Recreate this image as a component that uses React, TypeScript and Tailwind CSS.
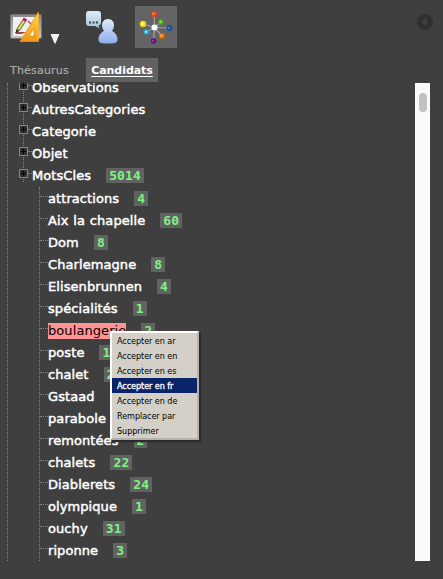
import React from "react";

const categories: { name: string; count?: number }[] = [
  { name: "Observations" },
  { name: "AutresCategories" },
  { name: "Categorie" },
  { name: "Objet" },
  { name: "MotsCles", count: 5014 },
];

const keywords = [
  { name: "attractions", count: 4 },
  { name: "Aix la chapelle", count: 60 },
  { name: "Dom", count: 8 },
  { name: "Charlemagne", count: 8 },
  { name: "Elisenbrunnen", count: 4 },
  { name: "spécialités", count: 1 },
  { name: "boulangerie", count: 2, selected: true },
  { name: "poste", count: 1 },
  { name: "chalet", count: 2 },
  { name: "Gstaad", count: 1 },
  { name: "parabole", count: 1 },
  { name: "remontées", count: 2 },
  { name: "chalets", count: 22 },
  { name: "Diablerets", count: 24 },
  { name: "olympique", count: 1 },
  { name: "ouchy", count: 31 },
  { name: "riponne", count: 3 },
];

const actions = [
  "Accepter en ar",
  "Accepter en en",
  "Accepter en es",
  "Accepter en fr",
  "Accepter en de",
  "Remplacer par",
  "Supprimer",
];

function Count({ value }: { value: number }) {
  return (
    <span className="ml-[15px] h-[15px] bg-[#626262] px-[3px] font-['DejaVu_Sans_Mono',monospace] text-[13px] leading-[15px] font-bold tracking-[0.15px] text-[#7df383] [-webkit-text-stroke:0px]">
      {value}
    </span>
  );
}

function BasketIcon() {
  return (
    <svg width="34" height="34" viewBox="0 0 34 34">
      <defs>
        <linearGradient id="square" x1="0" y1="0" x2="0" y2="1">
          <stop offset="0" stopColor="#ffdc45" />
          <stop offset="1" stopColor="#ef9416" />
        </linearGradient>
        <linearGradient id="frame" x1="0" y1="0" x2="0" y2="1">
          <stop offset="0" stopColor="#8b8589" />
          <stop offset="1" stopColor="#c9c5c7" />
        </linearGradient>
      </defs>
      <rect x="0.5" y="5.5" width="31" height="24" rx="1.5" fill="url(#frame)" stroke="#777174" />
      <rect x="3" y="8" width="26" height="19" fill="#f1eff3" />
      <path d="M5 23h11l-4 2H6z" fill="#a64533" />
      <path d="M8 21 14 12" stroke="#64722d" strokeWidth="4" />
      <path d="M8.3 20.5 14 12" stroke="#e4dc4f" strokeWidth="2.2" />
      <path d="m14 12 1.5-2.5" stroke="#bb1e68" strokeWidth="4" />
      <path d="m5.5 24 1-4 3 2z" fill="#2d3026" />
      <path d="m18 12 4 4" stroke="#9b526d" strokeWidth="1.5" />
      <path fillRule="evenodd" d="M28.5 3v29.5H10zM24 19v8h-5z" fill="url(#square)" stroke="#e89419" strokeWidth=".8" />
      <path d="M28 5v26" stroke="#f9c13c" />
    </svg>
  );
}

function ChatIcon() {
  return (
    <svg width="34" height="34" viewBox="0 0 34 34">
      <defs>
        <linearGradient id="person" x1="0" y1="0" x2="0" y2="1">
          <stop offset="0" stopColor="#dce9fc" />
          <stop offset="1" stopColor="#8eaee9" />
        </linearGradient>
        <linearGradient id="bubble" x1="0" y1="0" x2="0" y2="1">
          <stop offset="0" stopColor="#e2edf4" />
          <stop offset="1" stopColor="#a8c1d2" />
        </linearGradient>
      </defs>
      <path d="M4 1h9q3 0 3 3v8q0 3-2.5 3.5l1 3L10 16H4q-3 0-3-3V4q0-3 3-3z" fill="url(#bubble)" />
      <path d="M4 12.5h2m1.5 0h2m1.5 0h2" stroke="#34485d" strokeWidth="2" />
      <path d="M23 9c-4 0-6 3-6 6 0 3 1 4 2 6-4 2-5.5 5-5.5 9 0 3 4 3.5 9.5 3.5s9.5-.5 9.5-3.5c0-4-1.5-7-5.5-9 1-2 2-3 2-6 0-3-2-6-6-6z" fill="url(#person)" />
      <path d="M18.5 21.5q4.5 3.5 9 0" fill="none" stroke="#a9c0e9" strokeWidth=".8" />
    </svg>
  );
}

const nodes = [
  { x: 19, y: 8, r: 3, color: "#ed3c13", light: "#f0822c" },
  { x: 8, y: 18, r: 3.2, color: "#efdb12", light: "#ffff72" },
  { x: 26, y: 16, r: 2.7, color: "#43a91b", light: "#8ce747" },
  { x: 34.5, y: 22, r: 3, color: "#164b9e", light: "#397bd1" },
  { x: 27, y: 30, r: 3, color: "#d9680d", light: "#ffad3d" },
  { x: 18.5, y: 35, r: 2.7, color: "#630b76", light: "#9b35b0" },
  { x: 11.5, y: 26, r: 2.8, color: "#27a4cf", light: "#8ce9ff" },
];

function ThesaurusIcon() {
  return (
    <svg width="42" height="42" viewBox="0 0 42 42">
      {nodes.map((n) => (
        <path key={n.color} d={`M19.5 21.5 ${n.x} ${n.y}`} stroke="#a2a2a2" strokeWidth="1.2" />
      ))}
      {nodes.map((n) => (
        <g key={n.color}>
          <circle cx={n.x} cy={n.y} r={n.r} fill={n.color} />
          <circle cx={n.x - 0.5} cy={n.y - 0.2} r={n.r / 2} fill={n.light} />
        </g>
      ))}
      <circle cx="19.5" cy="21.5" r="3" fill="#fff" />
    </svg>
  );
}

export default function App() {
  return (
    <div className="relative flex h-[579px] w-[443px] flex-col overflow-hidden bg-[#3f3f3f] font-['DejaVu_Sans',Verdana,sans-serif] text-white">
      <header className="flex h-[58px] items-start">
        <div className="ml-[10px] pt-[9px]"><BasketIcon /></div>
        <svg className="mt-[34px] ml-[6px]" width="10" height="10"><path d="M.5 0h9L5.5 9.5h-1z" fill="#f2f2f2" /></svg>
        <div className="ml-[25px] pt-[10px]"><ChatIcon /></div>
        <div className="mt-[6px] ml-[16px] bg-[#646464]"><ThesaurusIcon /></div>
        <svg className="mt-[14px] ml-[240px]" width="16" height="16">
          <circle cx="8" cy="8" r="8" fill="#303030" />
          <path d="M4 8l6-4v8z" fill="#414141" />
        </svg>
      </header>

      <nav className="flex h-[25px] items-start text-[11px] leading-[24px]">
        <span className="ml-[10px] w-[76px] pt-px tracking-[0.2px] text-[#aaa] [-webkit-text-stroke:0.2px_#aaa]">Thésaurus</span>
        <span className="h-6 w-[72px] bg-[#626262] pt-px text-center text-[11px] leading-[23px] font-bold tracking-[-0.05px] underline underline-offset-2">Candidats</span>
      </nav>

      <main className="flex h-[478px]">
        <div className="ml-[7px] w-[408px] overflow-hidden border-l border-dotted border-[#858585] text-[13px] leading-[22px] tracking-[0.08px] [-webkit-text-stroke:0.45px_currentColor] [word-spacing:0.6px]">
          <ul className="-mt-[7px] ml-[15px] h-[106px] border-l border-dotted border-[#858585]">
            {categories.map((c) => (
              <li key={c.name} className="-ml-[5px] flex h-[22px] items-center">
                <span className="mb-[3px] flex size-[9px] items-center justify-center border border-[#858585] bg-[#303030]">
                  <svg width="5" height="5"><path d="M0 2.5h5M2.5 0v5" stroke="#000" /></svg>
                </span>
                <span className="mb-[4px] w-1 border-t border-dotted border-[#858585]" />
                <span className="pt-0.5">{c.name}</span>
                {c.count && <Count value={c.count} />}
              </li>
            ))}
          </ul>
          <ul className="mt-[7px] ml-[31px] h-[380px] border-l border-dotted border-[#858585]">
            {keywords.map((k, i) => (
              <li key={k.name} className={`flex h-[22px] items-center ${i === 0 ? "-mt-[2px]" : ""}`}>
                <span className="mb-[4px] w-2 border-t border-dotted border-[#858585]" />
                {k.selected ? (
                  <span className="mt-px h-4 bg-[#ff9494] leading-4 text-black [-webkit-text-stroke:0px]">{k.name}</span>
                ) : (
                  <span className="pt-0.5">{k.name}</span>
                )}
                <Count value={k.count} />
              </li>
            ))}
          </ul>
        </div>
        <div className="w-[15px] bg-[#fafafa] pt-[10px]">
          <div className="mx-auto h-[19px] w-2 rounded-full bg-[#c1c1c1]" />
        </div>
      </main>

      <ul className="absolute top-[331px] left-[110px] w-[89px] border-2 border-t-white border-r-[#b5b2ab] border-b-[#b5b2ab] border-l-white bg-[#d4d0c8] font-['DejaVu_Sans_Condensed','DejaVu_Sans',sans-serif] text-[9px] leading-[15px] tracking-[-0.07px] text-black shadow-[2px_2px_1px_#2b2b2b]">
        {actions.map((a) => (
          <li key={a} className={a === "Accepter en fr" ? "h-[15px] bg-[#0a246a] pt-px pl-[5px] text-white [-webkit-text-stroke:0.3px_white]" : "h-[15px] pt-px pl-[5px]"}>
            {a}
          </li>
        ))}
      </ul>
    </div>
  );
}
